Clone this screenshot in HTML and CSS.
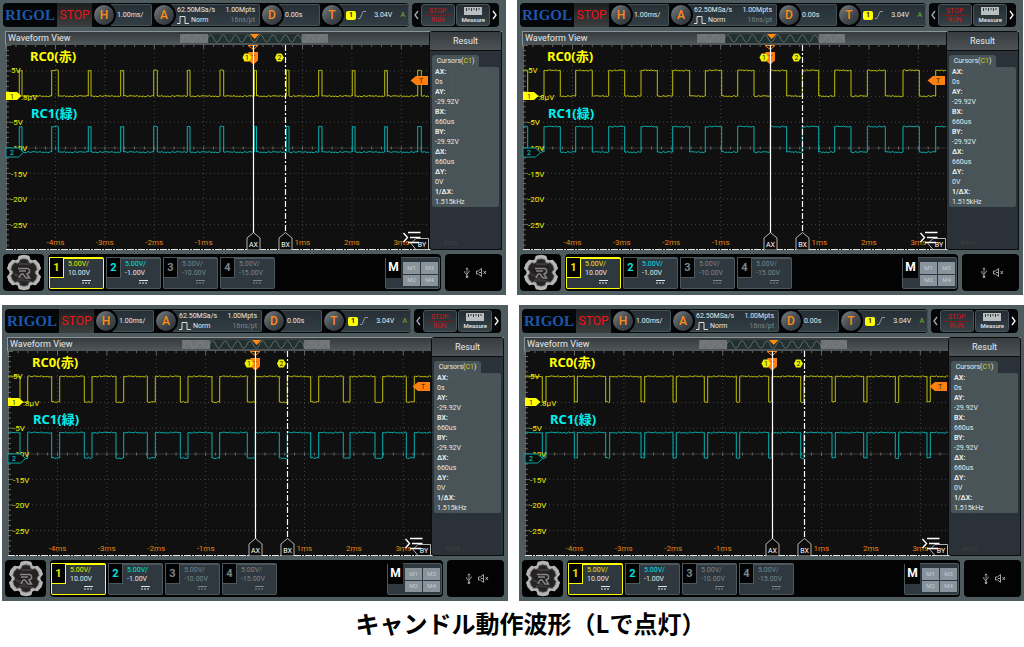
FILE: index.html
```html
<!DOCTYPE html>
<html lang="ja">
<head>
<meta charset="utf-8">
<title>キャンドル動作波形</title>
<link rel="stylesheet" href="styles.css">
</head>
<body>
<figure class="figure">
  <div class="row row-top">
    <section class="scope" data-trace="0"></section>
    <section class="scope" data-trace="1"></section>
  </div>
  <div class="row row-bottom">
    <section class="scope" data-trace="2"></section>
    <section class="scope" data-trace="3"></section>
  </div>
  <figcaption class="caption">キャンドル動作波形（Lで点灯）</figcaption>
</figure>
<script src="scope.js"></script>
</body>
</html>
```
FILE: styles.css
```css
* { box-sizing: border-box; }
body {
  margin: 0;
  background: #fff;
  font-family: Roboto, "Noto Sans CJK JP", sans-serif;
  font-size: 7px;
  line-height: 10px;
  color: #e6eaeb;
  overflow-x: hidden;
}
button {
  margin: 0;
  padding: 0;
  border: 0;
  background: none;
  color: inherit;
  font: inherit;
  cursor: pointer;
}
svg { display: block; }
.figure { margin: 0; }
.row { display: grid; grid-template-columns: 1fr 1fr; column-gap: 11px; }
.row-top { margin: -1px 1px 0 0; }
.row-bottom { margin: 10px -1px 0 2px; }
.caption {
  padding: 6px 0 0 37px;
  text-align: center;
  color: #000;
  font: bold 24px/32px "Noto Sans CJK JP", sans-serif;
}

.scope {
  display: flex;
  flex-direction: column;
  gap: 4px;
  padding: 4px 4px 4px 3px;
  background: #4e5c5f;
}

/* top bar */
.topbar { display: flex; gap: 3px; padding-right: 3px; height: 24px; }
.status {
  flex: 1;
  display: flex;
  background: #050607;
  border-radius: 4px;
  overflow: hidden;
}
.logo {
  flex: 0 0 54px;
  text-align: center;
  color: #1a57ad;
  font: bold 15px/25px "Liberation Serif", serif;
}
.state {
  flex: 0 0 35px;
  text-align: center;
  color: #f01414;
  background: linear-gradient(#1b1d1f, #3c3e40);
  font-size: 12px;
  line-height: 24px;
}
.seg { display: flex; flex: 60 1 0; }
.seg-acq { flex-grow: 108; }
.seg-trig { flex-grow: 89; }
.dial {
  flex: 0 0 24px;
  height: 24px;
  border: 2px solid #020202;
  border-radius: 50%;
  background: linear-gradient(135deg, #7b8388, #454c52 50%, #2c3237);
  color: #ff8b14;
  font-size: 12px;
  font-weight: 500;
  line-height: 21px;
  text-align: center;
  z-index: 1;
}
.readout {
  flex: 1;
  display: flex;
  align-items: center;
  margin: 1px 0 1px -6px;
  padding: 0 4px 0 7px;
  border: 1px solid #445157;
  border-left: 0;
  border-radius: 2px;
  background: linear-gradient(#263036, #323d43);
}
.acq { flex-direction: column; align-items: stretch; justify-content: center; }
.acq-line { display: flex; justify-content: space-between; }
.norm { display: flex; gap: 2px; }
.dim { color: #7b868b; }
.trig { justify-content: space-between; padding-left: 8px; padding-right: 3px; }
.source { display: flex; align-items: center; gap: 1px; }
.source b {
  width: 10px;
  height: 9px;
  border-radius: 2px;
  background: #ffff00;
  color: #222;
  line-height: 9px;
  text-align: center;
}
.auto { color: #76b82a; }
.tools {
  display: flex;
  flex: 0 0 87px;
  justify-content: space-between;
  align-items: center;
  padding: 1px 2px;
  background: #050607;
  border-radius: 4px;
}
.tool {
  width: 34px;
  height: 22px;
  border: 1px solid #4a565c;
  border-radius: 3px;
  background: linear-gradient(#232c32, #354047);
}
.tool svg { margin: 0 auto; }
.stoprun { color: #d01818; line-height: 8px; }
.stoprun span { display: block; }
.stoprun span + span { border-top: 1px solid #7c1a1c; margin: 0 3px; }
.measure { font-size: 6px; line-height: 8px; font-weight: 500; }

/* waveform view */
.view { position: relative; margin-left: 2px; }
.titlebar {
  display: flex;
  align-items: center;
  height: 14px;
  border: solid #8c9495;
  border-width: 1px 0 0 1px;
  background: linear-gradient(#353a3d, #50585a);
}
.titlebar h2 {
  flex: 0 0 35%;
  margin: 0;
  padding-left: 2px;
  font-size: 9px;
  font-weight: 400;
  line-height: 13px;
}
.overview { width: 30%; }
.plot { width: 100%; height: auto; }
.plot text { font-family: Roboto, sans-serif; font-size: 8px; }
.plot .volt { fill: #f0f000; }
.plot .time { fill: #e08410; text-anchor: middle; }
.plot .flag { font-size: 7px; text-anchor: middle; }
.plot .name { font-family: "Noto Sans", "Noto Sans CJK JP", sans-serif; font-size: 13px; font-weight: bold; }

/* result panel over the right end of the plot */
.result {
  position: absolute;
  top: 0;
  right: 0;
  bottom: 0;
  width: 73px;
  border: 1px solid #0a0c0d;
  border-radius: 3px;
  background: rgba(45, 53, 62, 0.9);
}
.result h3 {
  margin: 0 0 4px;
  border-bottom: 1px solid #0a0c0d;
  background: linear-gradient(#363c40, #4c5256);
  font-size: 9px;
  font-weight: 400;
  line-height: 18px;
  text-align: center;
}
.tab {
  width: 47px;
  margin-left: 2px;
  border-radius: 3px 3px 0 0;
  background: rgba(80, 94, 95, 0.8);
  line-height: 12px;
  text-align: center;
}
.tab em { color: #d4d400; font-style: normal; }
.values {
  margin: 0 2px;
  padding: 0 3px;
  border-radius: 0 2px 2px 2px;
  background: rgba(80, 94, 95, 0.8);
}
.values dt { font-weight: 700; }
.values dd { margin: 0; }

/* bottom bar */
.bottombar { display: flex; gap: 4px; height: 37px; }
.gear, .channels, .ports { background: #030303; border-radius: 4px; }
.gear { flex: 0 0 41px; }
.gear svg { margin: 0 auto; }
.channels { flex: 1; display: flex; gap: 2px; padding: 3px 1px 2px; }
.channel {
  display: flex;
  width: 55px;
  border: 1px solid #4c585d;
  border-top-width: 2px;
  border-radius: 2px;
  background: #2e383e;
  color: #7b868b;
  text-align: left;
}
.channel b {
  flex: 0 0 15px;
  height: 21px;
  margin: -2px 0 0 -1px;
  border: 1px solid #4c585d;
  background: #030303;
  font-size: 11px;
  line-height: 19px;
  text-align: center;
}
.scale { flex: 1; padding: 1px 0 0 4px; line-height: 9px; }
.scale span { display: block; }
.scale svg { margin: 2px 0 0 14px; }
.channel.ch1, .ch1 b { border-color: #ffff00; }
.ch1 b, .ch1 .div { color: #e8e800; }
.ch2 b, .ch2 .div { color: #00e0e0; }
.ch1, .ch2 { color: #e3e7e8; }
.math {
  display: flex;
  width: 55px;
  margin-left: auto;
  border: 1px solid #4c585d;
  border-radius: 2px;
  background: #2e383e;
}
.math > b {
  flex: 0 0 15px;
  height: 21px;
  margin: -1px 1px 0 0;
  background: #030303;
  color: #fff;
  font-size: 12px;
  line-height: 20px;
  text-align: center;
}
.math-grid { flex: 1; display: grid; grid-template-columns: 1fr 1fr; gap: 1px; padding: 4px 1px 2px; }
.math-grid button { background: #89939b; color: #c5ccd1; font-size: 6px; line-height: 6px; }
.ports { flex: 0 0 57px; display: flex; align-items: center; justify-content: center; gap: 6px; padding-left: 3px; }
```
FILE: scope.js
```javascript
// Edge positions of each trace in plot units; "high" is the level before the first edge.
const traces = [
  { high: false, edges: [19.3, 22, 51.7, 58.3, 88.3, 91, 120.7, 123.7, 153.7, 157.3, 187.3, 190, 220, 223.7, 254.3, 256.5, 286.3, 289, 318.7, 322, 352.3, 355, 384.7, 387.3, 417.7, 421.3, 451, 453.7, 484, 486.7] },
  { high: true, edges: [10.7, 27, 43.3, 58.7, 75.3, 91.7, 107.7, 124, 140.3, 155.7, 172.7, 188.3, 204.7, 220.7, 237, 253.3, 269.7, 285.3, 301.7, 317.7, 334, 350.3, 368.3, 386, 402.3, 418.7, 434.5, 450.3, 466.7, 482.7] },
  { high: true, edges: [18, 25.7, 49.7, 57.7, 82.3, 90, 114, 121.7, 145.3, 153.3, 178.3, 186, 210, 217.7, 245.3, 253.3, 277.3, 285.3, 308.7, 316.7, 341.3, 348, 373, 380.7, 404.3, 412.3, 436.7, 444.5, 468.7, 476.3] },
  { high: true, edges: [23.3, 27, 55.3, 58.3, 86.7, 90.7, 122, 125.7, 154, 157.3, 185.3, 188.7, 217.3, 220.7, 249.7, 253, 281.7, 285, 313, 316.3, 344.7, 348, 376.3, 379.7, 408, 411.3, 439.7, 443, 471, 474.3] }
];

function tracePath(trace, top, bottom, start) {
  let high = trace.high;
  let d = "";
  let x = start;
  let n = 3;
  for (const edge of [...trace.edges, 500]) {
    const y = high ? top : bottom;
    d += `${d ? "L" : "M"}${x} ${y}`;
    while (x + 1.5 < edge) {
      x += 1.5;
      n = (n * 7 + 5) % 31;
      d += `L${x.toFixed(1)} ${(y + (n % 5 - 2) * 0.3).toFixed(2)}`;
    }
    d += `L${edge} ${y}`;
    x = edge;
    high = !high;
  }
  return d;
}

function grid() {
  let dots = "", ticks = "";
  for (let i = 0; i < 9; i++) dots += `M${55.5 + i * 49.4} 46V250`;
  for (let i = 1; i < 8; i++) if (i !== 4) dots += `M6 ${46.4 + i * 25.6}H500`;
  for (let i = 0; i < 50; i++) {
    const x = (6.1 + i * 9.88).toFixed(1);
    ticks += `M${x} 46v${i % 5 ? 2 : 4}M${x} 147.5v3`;
  }
  for (let i = 0; i < 40; i++) ticks += `M6 ${(46.4 + i * 5.12).toFixed(1)}h${i % 5 ? 3 : 5}`;
  return `<path d="${dots}" stroke="#505050" stroke-width=".8" stroke-dasharray="1 3"/>
    <path d="M6 149H500" stroke="#3c3c3c" stroke-width=".8"/>
    <path d="${ticks}" stroke="#8a8a8a" stroke-width=".7"/>
    <path d="M6 46V251" stroke="#999"/>
    <path d="M6 250.500H500" stroke="#e4e4e4" stroke-dasharray="7 1 2 1"/>`;
}

function plot(trace) {
  const volts = [["5V", 11, 74], ["-5V", 11, 126], ["-10V", 11, 152], ["-15V", 11, 178], ["-20V", 11, 203], ["-25V", 11, 229], [".8µV", 21, 101]]
    .map(([t, x, y]) => `<text class="volt" x="${x}" y="${y}">${t}</text>`).join("");
  const times = [-4, -3, -2, -1, 1, 2, 3, 4]
    .map(t => `<text class="time" x="${253 + t * 49.4}" y="246">${t}ms</text>`).join("");
  const house = (x, t) => `<path d="M${x - 6.5} 251V239L${x} 233.500L${x + 6.5} 239V251Z" fill="#0c0c0c" stroke="#ddd" stroke-width=".8"/>
    <text class="flag" x="${x}" y="248" fill="#fff">${t}</text>`;
  const hex = (x, t) => `<path d="M${x - 4.5} 58.500l2-4h4.500l2.500 4l-2.500 4h-4.500Z" fill="#f0f000"/>
    <text class="flag" x="${x}" y="61" fill="#222">${t}</text>`;
  return `<svg class="plot" viewBox="5 46 497 205" fill="none">
    <rect x="5" y="46" width="497" height="206" fill="#101010"/>
    ${grid()}
    ${times}
    <path d="${tracePath(trace, 71.300, 97, 6)}" stroke="#bdbd08"/>
    <path d="${tracePath(trace, 127.500, 153, 6)}" stroke="#08b0b0"/>
    ${volts}
    <path d="M6 93H17L21.500 97L17 101H6Z" fill="#ffff00"/>
    <text class="flag" x="12" y="99.500" fill="#222">1</text>
    <path d="M6 149H18.500L23.500 153.500L18.500 158H6Z" fill="#0b0b0b" stroke="#08a3a3"/>
    <text class="flag" x="12" y="156" fill="#00e0e0">2</text>
    <text class="name" x="30" y="62" fill="#ffff00">RC0(赤)</text>
    <text class="name" x="31" y="119" fill="#00f0f0">RC1(緑)</text>
    <path d="M248 46.500H258L253.300 50.500Z" stroke="#ff8010"/>
    <path d="M248.500 53H258V61.500L253.300 65.500L248.500 61.500Z" fill="#ff8010"/>
    <text class="flag" x="253.300" y="61" fill="#5a2a00">T</text>
    ${hex(247, 1)}${hex(279.5, 2)}
    <path d="M253.500 46V234" stroke="#fff" stroke-width="1.200"/>
    <path d="M285.500 46V234" stroke="#fff" stroke-width="1.200" stroke-dasharray="6 2 2 2"/>
    ${house(253.5, "AX")}${house(285.5, "BX")}
    <path d="M410.500 81.500L416 77H428V86H416Z" fill="#ff8010"/>
    <text class="flag" x="421" y="84" fill="#3a1c00">T</text>
    <path d="M411 244.500L416 239.500H428.500V250.500H416Z" fill="#0c0c0c" stroke="#ddd" stroke-width=".8"/>
    <text class="flag" x="422" y="248" fill="#fff">BY</text>
    <path d="M403.500 234L407.500 238.500L403.500 243M408 233.500H420.500M410 238.500H420.500M408 243.500H419" stroke="#fff" stroke-width="1.400"/>
  </svg>`;
}

function overview() {
  let wave = "";
  for (let i = 0; i < 12; i++) {
    const x = i * 12.4 - 0.5;
    wave += `M${x} 8C${x + 3} 8 ${x + 3.2} 1 ${x + 6.2} 1S${x + 9.4} 8 ${x + 12.4} 8`;
  }
  return `<svg class="overview" viewBox="0 0 148 9" fill="none" aria-hidden="true">
    <rect width="148" height="9" fill="#707374"/><rect x="28" width="93" height="9" fill="#22302f"/>
    <path d="${wave}" stroke="#7c8888" stroke-width=".7"/>
    <path d="M69.500 0H79L74.300 5Z" fill="#ff8b10"/></svg>`;
}

// Outline of a six-toothed wheel with the given overall radius.
function wheel(radius) {
  let d = "";
  for (let i = 0; i < 6; i++) {
    [[-23, 0.86], [-17, 1], [0, 1.02], [17, 1], [23, 0.86], [30, 0.82]].forEach(([a, k], j) => {
      const t = (i * 60 + 30 + a) * Math.PI / 180;
      d += `${i || j ? "L" : "M"}${(20 + radius * k * Math.cos(t)).toFixed(1)} ${(18.5 + radius * k * Math.sin(t)).toFixed(1)}`;
    });
  }
  return d + "Z";
}

function gear() {
  return `<svg width="40" height="37" viewBox="0 0 40 37" fill="none" aria-hidden="true">
    <path d="${wheel(17)}" fill="#b4b4b4" stroke="#cfcfcf" stroke-width=".8" stroke-linejoin="round"/>
    <path d="${wheel(13.500)}" fill="#252222" stroke="#6b6868" stroke-width=".8"/>
    <path d="M10 20L20 25M13 26L26 27M15 10H26" stroke="#3d3939" stroke-width="2"/>
    <path d="M14 14.500H24L25.500 16V18.500L23 20L25.500 24H22L19 20H17M15 17H22M17 20L15 24" stroke="#858585" stroke-width="1.500"/></svg>`;
}

const dc = `<svg width="9" height="4" viewBox="0 0 9 4" stroke="currentColor" aria-hidden="true"><path d="M0 .5H9"/><path d="M0 3H9" stroke-dasharray="2 1"/></svg>`;
const channel = (n, div, offset) => `<button class="channel ch${n}"><b>${n}</b><span class="scale"><span class="div">${div}</span><span>${offset}</span>${dc}</span></button>`;
const chevron = (d, color, label) => `<button aria-label="${label}"><svg width="5" height="10" viewBox="0 0 5 10" fill="none" stroke="${color}" stroke-width="1.300"><path d="${d}"/></svg></button>`;
const results = [["AX", "0s"], ["AY", "-29.92V"], ["BX", "660us"], ["BY", "-29.92V"], ["ΔX", "660us"], ["ΔY", "0V"], ["1/ΔX", "1.515kHz"]];

function scope(trace) {
  return `
  <header class="topbar">
    <div class="status">
      <span class="logo">RIGOL</span><span class="state">STOP</span>
      <div class="seg"><span class="dial">H</span><span class="readout">1.00ms/</span></div>
      <div class="seg seg-acq"><span class="dial">A</span><div class="readout acq">
        <div class="acq-line"><span>62.50MSa/s</span><span>1.00Mpts</span></div>
        <div class="acq-line"><span class="norm"><svg width="12" height="9" viewBox="0 0 12 9" fill="none" stroke="#ddd" aria-hidden="true"><path d="M0 8.500H3V1.500H8V8.500H12"/></svg>Norm</span><span class="dim">16ns/pt</span></div>
      </div></div>
      <div class="seg"><span class="dial">D</span><span class="readout">0.00s</span></div>
      <div class="seg seg-trig"><span class="dial">T</span><div class="readout trig">
        <span class="source"><b>1</b><svg width="9" height="8" viewBox="0 0 9 8" fill="none" stroke="#aab" stroke-width=".8" aria-hidden="true"><path d="M1 7.500H3L6 .5H9"/></svg></span>
        <span>3.04V</span><span class="auto">A</span>
      </div></div>
    </div>
    <nav class="tools">
      ${chevron("M4 1L1 5L4 9", "#a6adb0", "前へ")}
      <button class="tool stoprun"><span>STOP</span><span>RUN</span></button>
      <button class="tool measure"><svg width="18" height="9" viewBox="0 0 18 9" aria-hidden="true"><rect width="18" height="8" fill="#b9bec0"/><path d="M2.500 1V4M5 1V3M7.500 1V4M10 1V3M12.500 1V4M15 1V3" stroke="#333c42"/></svg>Measure</button>
      ${chevron("M1 1L4 5L1 9", "#ffffff", "次へ")}
    </nav>
  </header>
  <div class="view">
    <div class="titlebar"><h2>Waveform View</h2>${overview()}</div>
    ${plot(trace)}
    <aside class="result">
      <h3>Result</h3>
      <div class="tab">Cursors(<em>C1</em>)</div>
      <dl class="values">${results.map(([k, v]) => `<dt>${k}:</dt><dd>${v}</dd>`).join("")}</dl>
    </aside>
  </div>
  <footer class="bottombar">
    <button class="gear" aria-label="メニュー">${gear()}</button>
    <div class="channels">
      ${channel(1, "5.00V/", "10.00V")}${channel(2, "5.00V/", "-1.00V")}${channel(3, "5.00V/", "-10.00V")}${channel(4, "5.00V/", "-15.00V")}
      <div class="math"><b>M</b><div class="math-grid"><button>M1</button><button>M3</button><button>M2</button><button>M4</button></div></div>
    </div>
    <div class="ports">
      <svg width="6" height="11" viewBox="0 0 6 11" fill="none" stroke="#b5b5b5" stroke-width=".8" aria-hidden="true"><path d="M3 10V1M1.800 2.300L3 .8L4.200 2.300M3 8L.8 6V4M3 7L5.200 5V3.500"/><circle cx="3" cy="9.800" r=".9" fill="#b5b5b5"/></svg>
      <svg width="11" height="9" viewBox="0 0 11 9" fill="none" stroke="#b5b5b5" stroke-width=".9" aria-hidden="true"><path d="M.5 3V6H2.500L5.500 8.500V.5L2.500 3ZM3 4.500H5M7.500 3L10 6M10 3L7.500 6"/></svg>
    </div>
  </footer>`;
}

document.querySelectorAll(".scope").forEach(el => {
  el.innerHTML = scope(traces[Number(el.dataset.trace)]);
});
```
